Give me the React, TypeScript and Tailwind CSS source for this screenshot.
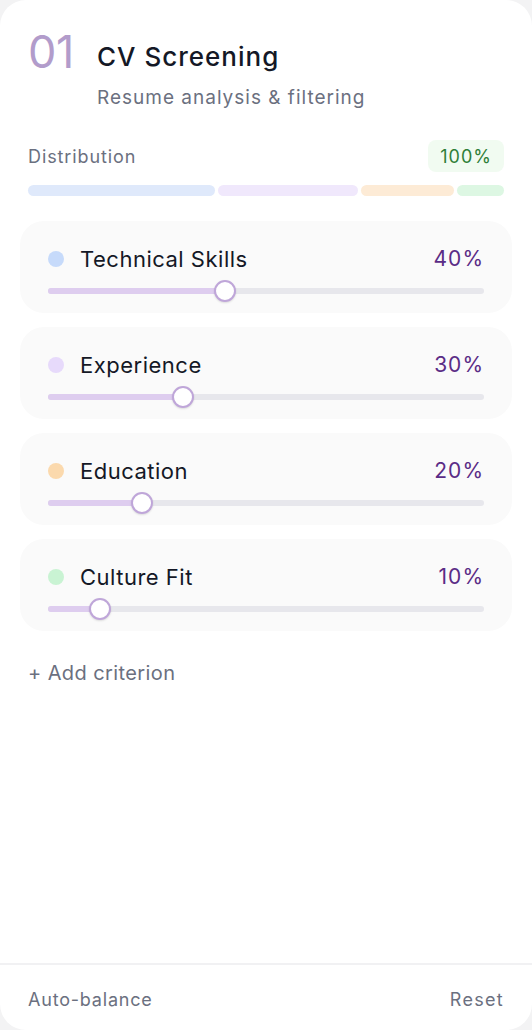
import { useState } from "react"

const criteria = [
    { name: "Technical Skills", value: 40, dot: "bg-[#c6dafa]" },
    { name: "Experience", value: 30, dot: "bg-[#e7dafb]" },
    { name: "Education", value: 20, dot: "bg-[#fbd9ad]" },
    { name: "Culture Fit", value: 10, dot: "bg-[#c9f3d3]" },
]

const segments = [
    { value: 40, color: "bg-[#dfe9fb]" },
    { value: 30, color: "bg-[#f0e8fc]" },
    { value: 20, color: "bg-[#fdebd6]" },
    { value: 10, color: "bg-[#ddf7e3]" },
]

function Slider({ value }: { value: number }) {
    // thumb center runs from r to (width - r)
    const pos = `calc(11px + ${value / 100} * (100% - 22px))`
    return (
        <div className="relative h-[22px] mt-[8px]">
            <div className="absolute left-0 right-0 top-[8px] h-[6px] rounded-full bg-[#e7e7ec]" />
            <div className="absolute left-0 top-[8px] h-[6px] rounded-full bg-[#decdef]" style={{ width: pos }} />
            <div
                className="absolute top-0 h-[22px] w-[22px] -ml-[11px] rounded-full bg-white border-2 border-[#bfa6d9] shadow-[0_1px_2px_rgba(0,0,0,0.12)]"
                style={{ left: pos }}
            />
        </div>
    )
}

export default function App() {
    const [items] = useState(criteria)

    return (
        <div className="min-h-screen bg-[#f3f3f4] font-['Inter',sans-serif]">
            <div className="h-[1030px] bg-white rounded-[26px] flex flex-col">

                {/* Header */}
                <div className="flex items-start pt-[28px] px-[28px]">
                    <span className="text-[45px] leading-[48px] font-normal text-[#b29ccb] tracking-[-0.5px] w-[69px]">01</span>
                    <div className="pt-[13px]">
                        <h1 className="text-[26px] leading-[32px] font-medium text-[#141826] tracking-[1px]">CV Screening</h1>
                        <p className="mt-[13px] text-[19px] leading-[24px] text-[#6b7080] tracking-[1px]">Resume analysis &amp; filtering</p>
                    </div>
                </div>

                {/* Distribution */}
                <div className="px-[28px] mt-[30px]">
                    <div className="flex items-center justify-between">
                        <span className="text-[18px] text-[#6b7080] tracking-[0.9px]">Distribution</span>
                        <span className="h-[32px] px-[12px] flex items-center rounded-[8px] bg-[#f1fbf1] text-[18px] text-[#2f7f38] tracking-[1px]">100%</span>
                    </div>
                    <div className="flex gap-[3px] mt-[13px] h-[11px]">
                        {segments.map((s, i) => (
                            <div key={i} className={`rounded-full ${s.color}`} style={{ flexGrow: s.value, flexBasis: 0 }} />
                        ))}
                    </div>
                </div>

                {/* Criteria */}
                <div className="px-[20px] mt-[25px] flex flex-col gap-[14px]">
                    {items.map((c) => (
                        <div key={c.name} className="h-[92px] rounded-[24px] bg-[#fafafa] px-[28px] pt-[25px]">
                            <div className="flex items-center h-[26px]">
                                <span className={`h-[16px] w-[16px] rounded-full ${c.dot}`} />
                                <span className="ml-[16px] text-[22px] text-[#141826] tracking-[0.5px]">{c.name}</span>
                                <span className="ml-auto text-[21px] text-[#5a2c86] tracking-[1px]">{c.value}%</span>
                            </div>
                            <Slider value={c.value} />
                        </div>
                    ))}
                </div>

                <button className="self-start ml-[28px] mt-[27px] text-[20px] text-[#6b7080] tracking-[0.4px]">+ Add criterion</button>

                {/* Footer */}
                <div className="mt-auto border-t-2 border-[#f1f1f3] h-[67px] pt-[4px] px-[28px] flex items-center justify-between">
                    <span className="text-[18px] text-[#6b7080] tracking-[0.8px]">Auto-balance</span>
                    <span className="text-[18px] text-[#6b7080] tracking-[1.3px]">Reset</span>
                </div>
            </div>
        </div>
    )
}
